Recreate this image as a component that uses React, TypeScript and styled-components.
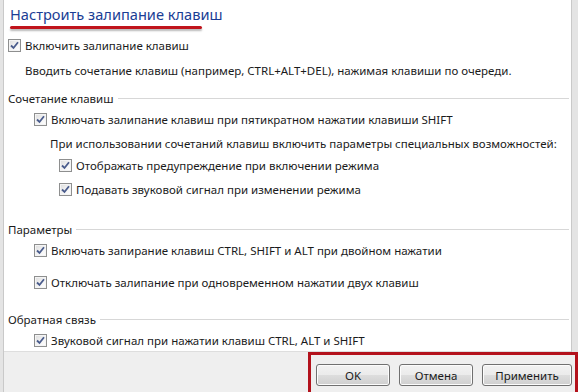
import styled, { createGlobalStyle } from 'styled-components';

const GlobalStyle = createGlobalStyle`
  html, body {
    margin: 0;
    padding: 0;
    background: #e6e6e6;
  }
  body {
    font-family: "Noto Sans", "Liberation Sans", sans-serif;
    font-size: 11.5px;
    color: #1b1b1b;
  }
`;

const Frame = styled.div`
  width: 578px;
  height: 392px;
  box-sizing: border-box;
  padding: 0 6px 0 3px;
  background: #e4e4e4;
  display: flex;
  overflow: hidden;
`;

const Panel = styled.div`
  flex: 1;
  min-width: 0;
  display: flex;
  flex-direction: column;
  background: #fff;
  border-left: 1px solid #c9c9c9;
  border-right: 1px solid #c9c9c9;
`;

const Content = styled.div`
  padding: 0 2px 0 4px;
  display: flex;
  flex-direction: column;
`;

const TitleBlock = styled.div`
  height: 35px;
  padding-left: 2px;
  box-sizing: border-box;
`;

const Title = styled.div`
  font-size: 14.6px;
  line-height: 22px;
  padding-top: 3px;
  color: #1a3d95;
`;

const Underline = styled.div`
  width: 192px;
  height: 3px;
  margin-top: 1px;
  border-radius: 2px;
  background: #c0141c;
  box-shadow: 0 2px 2px rgba(0, 0, 0, 0.28);
`;

const Row = styled.div<{ $mt: number; $indent: number }>`
  height: 20px;
  margin-top: ${(p) => p.$mt}px;
  padding-left: ${(p) => p.$indent}px;
  display: flex;
  align-items: center;
  gap: 4px;
  white-space: nowrap;
`;

const GroupHeader = styled.div<{ $mt: number }>`
  height: 20px;
  margin-top: ${(p) => p.$mt}px;
  padding-left: 0;
  display: flex;
  align-items: center;
  gap: 4px;
  white-space: nowrap;

  &::after {
    content: '';
    flex: 1;
    height: 1px;
    background: #d7d7d7;
  }
`;

const Box = styled.span`
  width: 13px;
  height: 13px;
  box-sizing: border-box;
  border: 1px solid #8e8f8f;
  background: linear-gradient(135deg, #dcdcdc 0%, #f5f5f5 60%, #ffffff 100%);
  display: inline-flex;
  align-items: center;
  justify-content: center;
  flex-shrink: 0;
  box-shadow: inset 0 0 0 1px #f4f4f4;
`;

const Footer = styled.div`
  margin-top: auto;
  height: 40px;
  background: #efefef;
  border-top: 1px solid #dedede;
  display: flex;
  justify-content: flex-end;
`;

const ButtonGroup = styled.div`
  display: flex;
  gap: 9px;
  padding: 9px 3px 6px 5px;
  border: 3px solid #b3121c;
  border-bottom: none;
  margin-right: -7px;
  position: relative;
  z-index: 1;
  background: #efefef;
`;

const Button = styled.button<{ $w: number }>`
  width: ${(p) => p.$w}px;
  height: 22px;
  border: 1px solid #707070;
  border-radius: 3px;
  background: linear-gradient(#f2f2f2 0%, #ebebeb 50%, #dddddd 51%, #cfcfcf 100%);
  box-shadow: inset 0 0 0 1px #fcfcfc;
  font-family: "Noto Sans", "Liberation Sans", sans-serif;
  font-size: 11.5px;
  color: #1b1b1b;
  padding: 0;
`;

function Check() {
  return (
    <Box>
      <svg width="9" height="9" viewBox="0 0 9 9">
        <path d="M1 4.5 L3.5 7 L8 1.2" fill="none" stroke="#4a5c8c" strokeWidth="1.8" />
      </svg>
    </Box>
  );
}

export default function App() {
  return (
    <Frame>
      <GlobalStyle />
      <Panel>
        <Content>
          <TitleBlock>
            <Title>Настроить залипание клавиш</Title>
            <Underline />
          </TitleBlock>
          <Row $mt={0} $indent={0}>
            <Check />
            Включить залипание клавиш
          </Row>
          <Row $mt={5} $indent={17}>
            Вводить сочетание клавиш (например, CTRL+ALT+DEL), нажимая клавиши по очереди.
          </Row>
          <GroupHeader $mt={8}>Сочетание клавиш</GroupHeader>
          <Row $mt={1} $indent={26}>
            <Check />
            Включать залипание клавиш при пятикратном нажатии клавиши SHIFT
          </Row>
          <Row $mt={4} $indent={42}>
            При использовании сочетаний клавиш включить параметры специальных возможностей:
          </Row>
          <Row $mt={2} $indent={51}>
            <Check />
            Отображать предупреждение при включении режима
          </Row>
          <Row $mt={4} $indent={51}>
            <Check />
            Подавать звуковой сигнал при изменении режима
          </Row>
          <GroupHeader $mt={20}>Параметры</GroupHeader>
          <Row $mt={1} $indent={26}>
            <Check />
            Включать запирание клавиш CTRL, SHIFT и ALT при двойном нажатии
          </Row>
          <Row $mt={12} $indent={26}>
            <Check />
            Отключать залипание при одновременном нажатии двух клавиш
          </Row>
          <GroupHeader $mt={17}>Обратная связь</GroupHeader>
          <Row $mt={1} $indent={26}>
            <Check />
            Звуковой сигнал при нажатии клавиш CTRL, ALT и SHIFT
          </Row>
        </Content>
        <Footer>
          <ButtonGroup>
            <Button $w={74}>OK</Button>
            <Button $w={74}>Отмена</Button>
            <Button $w={90}>Применить</Button>
          </ButtonGroup>
        </Footer>
      </Panel>
    </Frame>
  );
}
